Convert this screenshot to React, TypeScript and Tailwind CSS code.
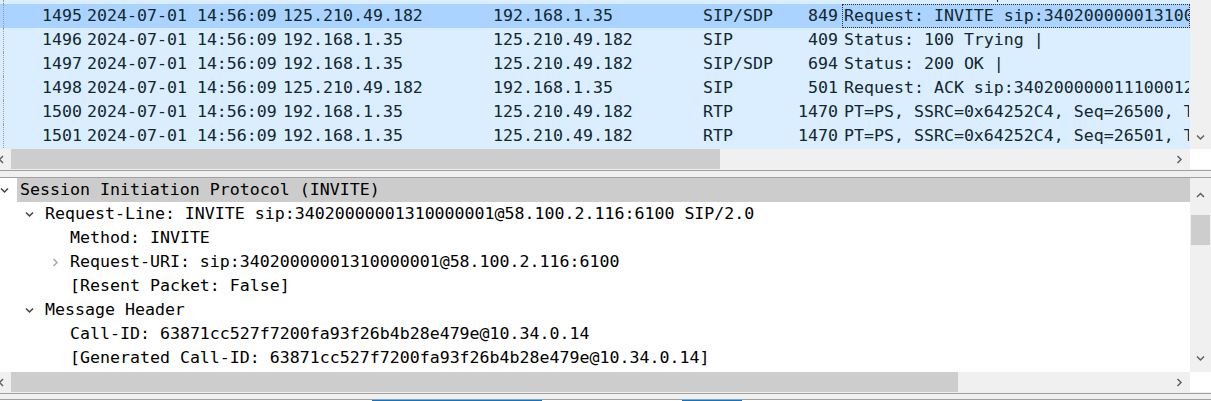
import React from "react";

type Packet = {
    no: number;
    time: string;
    src: string;
    dst: string;
    proto: string;
    len: number;
    info: string;
    selected?: boolean;
};

const packets: Packet[] = [
    { no: 1495, time: "2024-07-01 14:56:09", src: "125.210.49.182", dst: "192.168.1.35", proto: "SIP/SDP", len: 849, info: "Request: INVITE sip:34020000001310000001@58.100.2.116:6100 |", selected: true },
    { no: 1496, time: "2024-07-01 14:56:09", src: "192.168.1.35", dst: "125.210.49.182", proto: "SIP", len: 409, info: "Status: 100 Trying |" },
    { no: 1497, time: "2024-07-01 14:56:09", src: "192.168.1.35", dst: "125.210.49.182", proto: "SIP/SDP", len: 694, info: "Status: 200 OK |" },
    { no: 1498, time: "2024-07-01 14:56:09", src: "125.210.49.182", dst: "192.168.1.35", proto: "SIP", len: 501, info: "Request: ACK sip:34020000001110001200@125.210.49.182:5060 |" },
    { no: 1500, time: "2024-07-01 14:56:09", src: "192.168.1.35", dst: "125.210.49.182", proto: "RTP", len: 1470, info: "PT=PS, SSRC=0x64252C4, Seq=26500, Time=3287140424" },
    { no: 1501, time: "2024-07-01 14:56:09", src: "192.168.1.35", dst: "125.210.49.182", proto: "RTP", len: 1470, info: "PT=PS, SSRC=0x64252C4, Seq=26501, Time=3287140424" },
];

type TreeRow = { level: number; toggle: "open" | "closed" | null; text: string; selected?: boolean };

const tree: TreeRow[] = [
    { level: 0, toggle: "open", text: "Session Initiation Protocol (INVITE)", selected: true },
    { level: 1, toggle: "open", text: "Request-Line: INVITE sip:34020000001310000001@58.100.2.116:6100 SIP/2.0" },
    { level: 2, toggle: null, text: "Method: INVITE" },
    { level: 2, toggle: "closed", text: "Request-URI: sip:34020000001310000001@58.100.2.116:6100" },
    { level: 2, toggle: null, text: "[Resent Packet: False]" },
    { level: 1, toggle: "open", text: "Message Header" },
    { level: 2, toggle: null, text: "Call-ID: 63871cc527f7200fa93f26b4b28e479e@10.34.0.14" },
    { level: 2, toggle: null, text: "[Generated Call-ID: 63871cc527f7200fa93f26b4b28e479e@10.34.0.14]" },
];

const padLeft = ["pl-0", "pl-[25px]", "pl-[50px]"];

function Chevron({ dir, className = "" }: { dir: "up" | "down" | "left" | "right"; className?: string }) {
    const d = {
        down: "M1 1.5 L4.5 5 L8 1.5",
        up: "M1 5 L4.5 1.5 L8 5",
        right: "M1.5 1 L5 4.5 L1.5 8",
        left: "M5 1 L1.5 4.5 L5 8",
    }[dir];
    const vertical = dir === "up" || dir === "down";
    return (
        <svg width={vertical ? 9 : 7} height={vertical ? 7 : 9} viewBox={vertical ? "0 0 9 7" : "0 0 7 9"} className={className}>
            <path d={d} fill="none" stroke="currentColor" strokeWidth="1.5" />
        </svg>
    );
}

function HScroll({ thumb }: { thumb: string }) {
    return (
        <div className="flex h-[20px]">
            <div className="flex w-[1190px] bg-[#f0f0f0]">
                <div className="w-[13px] flex items-center text-[#606060] -ml-[2px]">
                    <Chevron dir="left" />
                </div>
                <div className={`${thumb} bg-[#cdcdcd]`} />
                <div className="flex-1 flex items-center justify-end pr-[7px] text-[#606060]">
                    <Chevron dir="right" />
                </div>
            </div>
            <div className="flex-1 bg-white" />
        </div>
    );
}

export default function App() {
    return (
        <div className="w-[1211px] h-[401px] overflow-hidden bg-white font-['DejaVu_Sans_Mono',monospace] text-[16.6px] leading-[24px]">
            {/* packet list */}
            <div className="flex h-[149px]">
                <div className="w-[1190px] bg-[#daeeff] text-[#12272e] overflow-hidden">
                    <div className="h-[4px] flex">
                        <div className="ml-[3px] border-l border-dotted border-[#9a9a9a]" />
                        <div className="ml-[993px] w-[1px] h-[2px] bg-[#12272e]" />
                    </div>
                    {packets.map((p) => (
                        <div key={p.no} className={`flex h-[24px] whitespace-nowrap ${p.selected ? "bg-[#aad4ff]" : ""}`}>
                            <div className="ml-[3px] w-[83px] border-l border-dotted border-[#9a9a9a] text-right pr-[4px]">{p.no}</div>
                            <div className="w-[196px] pl-[1px]">{p.time}</div>
                            <div className="w-[210px] pl-[1px]">{p.src}</div>
                            <div className="w-[210px] pl-[1px]">{p.dst}</div>
                            <div className="w-[92px] pl-[1px]">{p.proto}</div>
                            <div className="w-[48px] text-right pr-[4px]">{p.len}</div>
                            <div
                                className={`flex-1 overflow-hidden pl-[1px] border ${p.selected ? "border-dotted border-[#333]" : "border-transparent"} leading-[22px]`}
                            >
                                {p.info}
                            </div>
                        </div>
                    ))}
                </div>
                <div className="flex-1 bg-[#f0f0f0] flex flex-col justify-end items-center pb-[8px] text-[#606060]">
                    <Chevron dir="down" />
                </div>
            </div>
            <HScroll thumb="w-[709px]" />

            {/* splitter */}
            <div className="h-[9px] pt-[1px] bg-[#f0f0f0]">
                <div className="h-[8px] border-y border-[#a0a0a0]" />
            </div>

            {/* packet details */}
            <div className="flex h-[194px]">
                <div className="w-[1190px] text-black overflow-hidden">
                    {tree.map((r, i) => (
                        <div key={i} className={`flex h-[24px] whitespace-nowrap ${padLeft[r.level]}`}>
                            <div className="w-[17px] flex items-center">
                                {r.toggle === "open" && <Chevron dir="down" className="text-[#404040]" />}
                                {r.toggle === "closed" && <Chevron dir="right" className="ml-[2px] text-[#a8a8a8]" />}
                            </div>
                            <div className={`flex-1 pl-[3px] ${r.selected ? "bg-[#cccccc]" : ""}`}>{r.text}</div>
                        </div>
                    ))}
                </div>
                <div className="flex-1 bg-[#f0f0f0] flex flex-col items-center text-[#606060]">
                    <div className="h-[37px] flex items-center pb-[2px]">
                        <Chevron dir="up" />
                    </div>
                    <div className="w-[19px] h-[30px] bg-[#cdcdcd]" />
                    <div className="flex-1" />
                    <div className="h-[24px] flex items-center pb-[4px]">
                        <Chevron dir="down" />
                    </div>
                </div>
            </div>
            <HScroll thumb="w-[947px]" />

            {/* status area edge */}
            <div className="h-[7px] pt-[1px] bg-[#f0f0f0]">
                <div className="h-[6px] border-t border-[#a0a0a0]" />
            </div>
            <div className="h-[1px] bg-[#a0a0a0]" />
            <div className="flex h-[2px] bg-white">
                <div className="ml-[372px] w-[170px] bg-[#0078d7]" />
                <div className="ml-[140px] w-[60px] bg-[#0078d7]" />
            </div>
        </div>
    );
}
